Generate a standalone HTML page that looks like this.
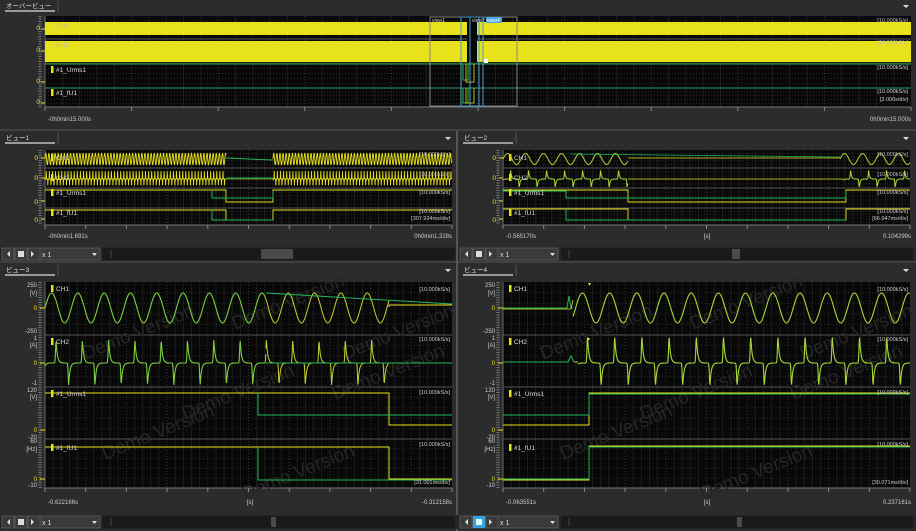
<!DOCTYPE html>
<html><head><meta charset="utf-8"><style>
html,body{margin:0;padding:0;background:#2c2c2c;width:916px;height:531px;overflow:hidden}
svg{display:block}
text{font-family:"Liberation Sans","Noto Sans CJK JP",sans-serif}
</style></head><body>
<svg id="s" width="916" height="531" viewBox="0 0 916 531" xmlns="http://www.w3.org/2000/svg"></svg>
<script>
var o='';
var Y='#e8e21c',G='#22b85a',YG='#a8d83a';
function R(x,y,w,h,f,s){o+='<rect x="'+x+'" y="'+y+'" width="'+w+'" height="'+h+'" fill="'+f+'"'+(s?' stroke="'+s+'" stroke-width="1"':'')+'/>';}
function L(x1,y1,x2,y2,c,w,d){o+='<line x1="'+x1+'" y1="'+y1+'" x2="'+x2+'" y2="'+y2+'" stroke="'+c+'" stroke-width="'+(w||1)+'"'+(d?' stroke-dasharray="'+d+'"':'')+'/>';}
function T(x,y,t,c,sz,anc,extra){o+='<text x="'+x+'" y="'+y+'" fill="'+c+'" font-size="'+(sz||6.5)+'"'+(anc?' text-anchor="'+anc+'"':'')+(extra||'')+'>'+t+'</text>';}
function P(d,c,w){o+='<path d="'+d+'" fill="none" stroke="'+c+'" stroke-width="'+(w||1)+'"/>';}
function poly(pts,c,w){var d='M'+pts.map(function(p){return p[0].toFixed(1)+','+p[1].toFixed(1)}).join('L');P(d,c,w);}
function sine(x0,x1,yc,a,per,c,w){var p=[];for(var x=x0;x<=x1;x+=Math.min(0.5,per/8)){p.push([x,yc-a*Math.sin(2*Math.PI*(x-x0)/per)]);}poly(p,c,w);}
function g(d){d=d-Math.floor(d+0.5);return d<0?Math.exp(-Math.pow(d/0.025,2)):Math.exp(-d/0.05);}
function spk(x0,x1,yc,au,ad,per,c,w){var p=[];for(var x=x0;x<=x1;x+=Math.min(0.4,per/12)){var ph=(x-x0)/per;p.push([x,yc-au*g(ph-0.42)+ad*g(ph-0.9)]);}poly(p,c,w);}
function tab(x,y,t,w){T(x+6,y+8,t,'#ddd',6.5);L(x+5,y+11,x+55,y+11,'#ddd',1.3);L(x+58,y+1,x+58,y+12,'#555');o+='<path d="M'+(w-13)+','+(y+5)+'l6,0l-3,3z" fill="#ddd"/>';}
function grid(x0,y0,x1,y1,nx,rows){R(x0,y0,x1-x0,y1-y0,'#080808');
 for(var i=1;i<nx*5;i++){var x=x0+(x1-x0)*i/(nx*5);L(x,y0,x,y1,i%5?'#1c1c1c':'#333',1,i%5?'':'1,2');}
 rows.forEach(function(r){for(var k=1;k<5;k++){var yy=r[0]+(r[1]-r[0])*k/5;L(x0,yy,x1,yy,'#2a2a2a',1,'1,2');}L(x0,r[1],x1,r[1],'#555',1);});
 L(x0-5,y0,x0-5,y1,'#777',3,'1,1.5');L(x0,y0,x0,y1+2,'#666');L(x0,y1,x1,y1,'#777');
 for(var i=0;i<=nx;i++){var x=x0+(x1-x0)*i/nx;L(x,y1,x,y1+4,'#888');}}
function ctl(x,y,w){R(x,y,w,14,'#262626');
 [[x+2,'l'],[x+15,'s'],[x+28,'r']].forEach(function(b){R(b[0],y+1,12,12,'#3a3a3a','#555');});
 o+='<path d="M'+(x+10)+','+(y+4)+'l-3,3l3,3z" fill="#ddd"/><rect x="'+(x+18)+'" y="'+(y+4)+'" width="6" height="6" fill="#ddd"/><path d="M'+(x+31)+','+(y+4)+'l3,3l-3,3z" fill="#ddd"/>';
 R(x+40,y+1,60,12,'#3a3a3a','#555');T(x+42,y+10,'x 1','#ddd',7);o+='<path d="M'+(x+92)+','+(y+6)+'l5,0l-2.5,3z" fill="#ddd"/>';
 R(x+103,y+1,w-106,12,'#1a1a1a');L(x+111,y+3,x+111,y+11,'#444');}
function lbl(x,y,t){R(x,y-6,2.5,7,Y);T(x+5,y,t,'#ddd',6.5);}

/* ===== Overview ===== */
R(0,0,916,131,'#2c2c2c');tab(0,0,'オーバービュー',916);
grid(45,16,911,107,10,[[16,39],[39,64],[64,88],[88,107]]);
R(45,22,866,13,Y);R(45,41,866,21,Y);
R(467,20,10,45,'#080808');
L(45,64,911,64,G,0.8);L(45,88,911,88,G,0.8);L(45,63,911,63,'#556a20',0.6);
poly([[463,64],[463,80],[468,80],[468,64],[477,64]],G);poly([[463,88],[463,103],[468,103],[468,88],[477,88]],G);
poly([[466,64],[466,82],[474,82],[474,64]],Y,0.8);poly([[466,88],[466,103],[474,103],[474,88]],Y,0.8);
R(430,17,87,89,'none','#888');R(461,17,22,89,'none','#4aa0d0');R(470,17,9,89,'none','#4aa0d0');
R(486,17,16,6,'#4aa8e0');T(487,22,'view4','#fff',5);T(432,22,'view1','#ccc',5);T(472,22,'view2','#ccc',5);
R(484,59,4,4,'#fff');
[['CH1',28],['CH2',47]].forEach(function(a){R(51,a[1]-6,2.5,7,Y);T(56,a[1],a[0],'#bba',6.5);});
lbl(51,72,'#1_Urms1');lbl(51,95,'#1_fU1');
T(40,30,'0',Y,6.5,'end');T(40,52,'0',Y,6.5,'end');T(40,83,'0',Y,6.5,'end');T(40,104,'0',Y,6.5,'end');
L(41,29,45,29,Y);L(41,51,45,51,Y);L(41,82,45,82,Y);L(41,103,45,103,Y);
T(908,22,'[10.000kS/s]','#bbb',5.5,'end');T(908,44,'[10.000kS/s]','#bbb',5.5,'end');T(908,69,'[10.000kS/s]','#ccc',5.5,'end');T(908,93,'[10.000kS/s]','#ccc',5.5,'end');T(908,101,'[3.000s/div]','#ccc',5.5,'end');
T(48,121,'-0h0min15.000s','#ccc',6);T(911,121,'0h0min15.000s','#ccc',6,'end');
L(0,130,916,130,'#555');

function small(ox,title,conf){
 var x0=ox+45,x1=ox+452;
 tab(ox,132,title,ox+458);
 grid(x0,150,x1,225,10,[[150,168],[168,188],[188,208],[208,225]]);
 T(x0-7,160,'0',Y,6.5,'end');T(x0-7,180,'0',Y,6.5,'end');T(x0-7,204,'0',Y,6.5,'end');T(x0-7,222,'0',Y,6.5,'end');
 L(x0-4,158,x0,158,Y);L(x0-4,178,x0,178,Y);L(x0-4,201,x0,201,Y);L(x0-4,219,x0,219,Y);
 conf(x0,x1);
 lbl(x0+6,195,'#1_Urms1');lbl(x0+6,215,'#1_fU1');
 R(x0+6,154,2.5,7,Y);T(x0+11,160,'CH1','#ccc',6.5);R(x0+6,174,2.5,7,Y);T(x0+11,180,'CH2','#ccc',6.5);
 T(x1-2,156,'[10.000kS/s]','#bbb',5.5,'end');T(x1-2,176,'[10.000kS/s]','#bbb',5.5,'end');T(x1-2,194,'[10.000kS/s]','#ccc',5.5,'end');T(x1-2,213,'[10.000kS/s]','#ccc',5.5,'end');
 ctl(ox,247,458);
}
small(0,'ビュー1',function(x0,x1){
 sine(x0,226,159,6,3.1,Y,0.9);sine(273,x1,159,6,3.1,Y,0.9);
 spk(x0,226,179,8,9,3.1,Y,0.9);spk(273,x1,179,8,9,3.1,Y,0.9);
 L(226,158,273,160,G);L(226,178,273,178,G);L(226,179,273,179,Y,0.6);
 poly([[x0,190],[226,190],[226,202],[273,202],[273,190],[x1,190]],Y,0.9);
 poly([[212,190],[212,198],[273,198],[273,191]],G);
 poly([[x0,210],[226,210],[226,220],[273,220],[273,210],[x1,210]],Y,0.9);
 poly([[212,210],[212,220],[273,220]],G);
 T(x1-2,220,'[307.934ms/div]','#ccc',5.5,'end');
});
T(48,238,'-0h0min1.691s','#ccc',6);T(452,238,'0h0min1.328s','#ccc',6,'end');
R(261,249,32,10,'#4a4a4a');

small(458,'ビュー2',function(x0,x1){
 sine(x0,628,159,5.5,18,YG,1);sine(840,x1,159,5.5,18,YG,1);L(628,158,840,158,Y,0.8);L(570,154,840,157,G,0.8);
 spk(x0,628,179,9,9,18,YG,1);spk(843,x1,179,9,9,18,YG,1);L(628,179,843,179,Y,0.8);
 poly([[x0,190],[628,190],[628,202],[846,202],[846,190],[x1,190]],Y,0.9);
 poly([[x0,191],[566,191],[566,198],[846,198],[846,191]],G);
 poly([[x0,209],[628,209],[628,220],[846,220],[846,209],[x1,209]],Y,0.9);
 poly([[566,209],[566,220],[846,220]],G);
 T(x1-2,220,'[66.947ms/div]','#ccc',5.5,'end');
});
T(506,238,'-0.565170s','#ccc',6);T(707,238,'[s]','#ccc',6,'middle');T(911,238,'0.104299s','#ccc',6,'end');
R(732,249,8,10,'#4a4a4a');
L(457,131,457,531,'#555',2);
L(0,262,916,262,'#555');

function big(ox,title,conf){
 var x0=ox+45,x1=ox+452;
 tab(ox,264,title,ox+458);
 grid(x0,282,x1,488,10,[[282,335],[335,387],[387,439],[439,488]]);
 var ax=function(y,t){T(x0-8,y,t,'#ccc',6,'end');};
 ax(287,'250');ax(295,'[V]');T(x0-8,310,'0',Y,6,'end');ax(333,'-250');
 ax(340,'1');ax(347,'[A]');T(x0-8,365,'0',Y,6,'end');ax(385,'-1');
 ax(392,'120');ax(399,'[V]');T(x0-8,432,'0',Y,6,'end');ax(439,'-20');
 ax(443,'60');ax(451,'[Hz]');T(x0-8,481,'0',Y,6,'end');ax(487,'-10');
 L(x0-5,308,x0,308,Y);L(x0-5,363,x0,363,Y);L(x0-5,430,x0,430,Y);L(x0-5,479,x0,479,Y);
 [[x0+40,360],[x0+190,330],[x0+140,420],[x0+290,400],[x0+60,460],[x0+200,500],[x0+300,360]].forEach(function(p){T(p[0],p[1],'Demo Version','#262626',19,null,' transform="rotate(-22 '+p[0]+' '+p[1]+')"');});
 conf(x0,x1);
 lbl(x0+6,291,'CH1');lbl(x0+6,344,'CH2');lbl(x0+6,396,'#1_Urms1');lbl(x0+6,450,'#1_fU1');
 T(x1-2,291,'[10.000kS/s]','#ccc',5.5,'end');T(x1-2,341,'[10.000kS/s]','#ccc',5.5,'end');T(x1-2,394,'[10.000kS/s]','#ccc',5.5,'end');T(x1-2,446,'[10.000kS/s]','#ccc',5.5,'end');
 ctl(ox,515,458);
}
big(0,'ビュー3',function(x0,x1){
 sine(x0,266,308,15,26.3,'#7cd040',1.1);
 var p=[];for(var x=266;x<=389;x+=0.5)p.push([x,308-15*Math.sin(2*Math.PI*(x-x0)/26.3)]);poly(p,'#c8d030',1);
 L(389,307,389,305,Y);L(389,305,452,305,Y,1);L(266,293,452,304,G,1);
 spk(x0,266,363,23,22,26.3,'#7cd040',1.1);
 var q=[];for(var x=266;x<=389;x+=0.4){var ph=(x-x0)/26.3;q.push([x,363-23*g(ph-0.42)+22*g(ph-0.9)]);}poly(q,'#c8d030',1);
 L(266,363,452,363,G,1);
 poly([[x0,393],[389,393],[389,425],[x1,425]],Y,1);poly([[258,393],[258,415],[x1,415]],G,1);
 poly([[x0,447],[389,447],[389,479],[x1,479]],Y,1);poly([[258,447],[258,480],[x1,480]],G,1);
 T(x1-2,484,'[31.001ms/div]','#ccc',5.5,'end');
});
T(48,504,'-0.622166s','#ccc',6);T(250,504,'[s]','#ccc',6,'middle');T(452,504,'-0.312158s','#ccc',6,'end');
R(271,517,5,10,'#4a4a4a');

big(458,'ビュー4',function(x0,x1){
 poly([[x0,308],[567,308],[569,296],[571,308],[573,308]],G,1);poly([[x0,309],[571,309],[573,300]],Y,0.8);
 var p=[];for(var x=573;x<=x1;x+=0.5)p.push([x,308-15*Math.sin(2*Math.PI*(x-573)/27.2-0.6)]);poly(p,YG,1.1);
 poly([[x0,362],[568,362],[571,356],[574,362]],G,1);
 var q=[];for(var x=578;x<=x1;x+=0.4){var ph=(x-578)/27.2;q.push([x,363-27*g(ph-0.35)+23*g(ph-0.85)]);}poly(q,YG,1.1);L(574,362,578,362,YG);
 poly([[x0,425],[589,425],[589,393],[x1,393]],Y,1);poly([[x0,415],[589,415],[589,394],[x1,394]],G,1);
 poly([[x0,480],[589,480],[589,446],[x1,446]],Y,1);poly([[x0,479],[589,479],[589,447],[x1,447]],G,1);
 o+='<path d="M588,283l3,0l-1.5,3z" fill="'+Y+'"/><path d="M587,338l3,0l-1.5,3z" fill="'+Y+'"/>';
 T(x1-2,484,'[30.071ms/div]','#ccc',5.5,'end');
});
T(506,504,'-0.063551s','#ccc',6);T(707,504,'[s]','#ccc',6,'middle');T(911,504,'0.237161s','#ccc',6,'end');
R(737,517,5,10,'#4a4a4a');R(473,516,12,12,'#3aa0e0');R(476,519,6,6,'#dfe');
document.getElementById('s').innerHTML=o;
</script>
</body></html>
